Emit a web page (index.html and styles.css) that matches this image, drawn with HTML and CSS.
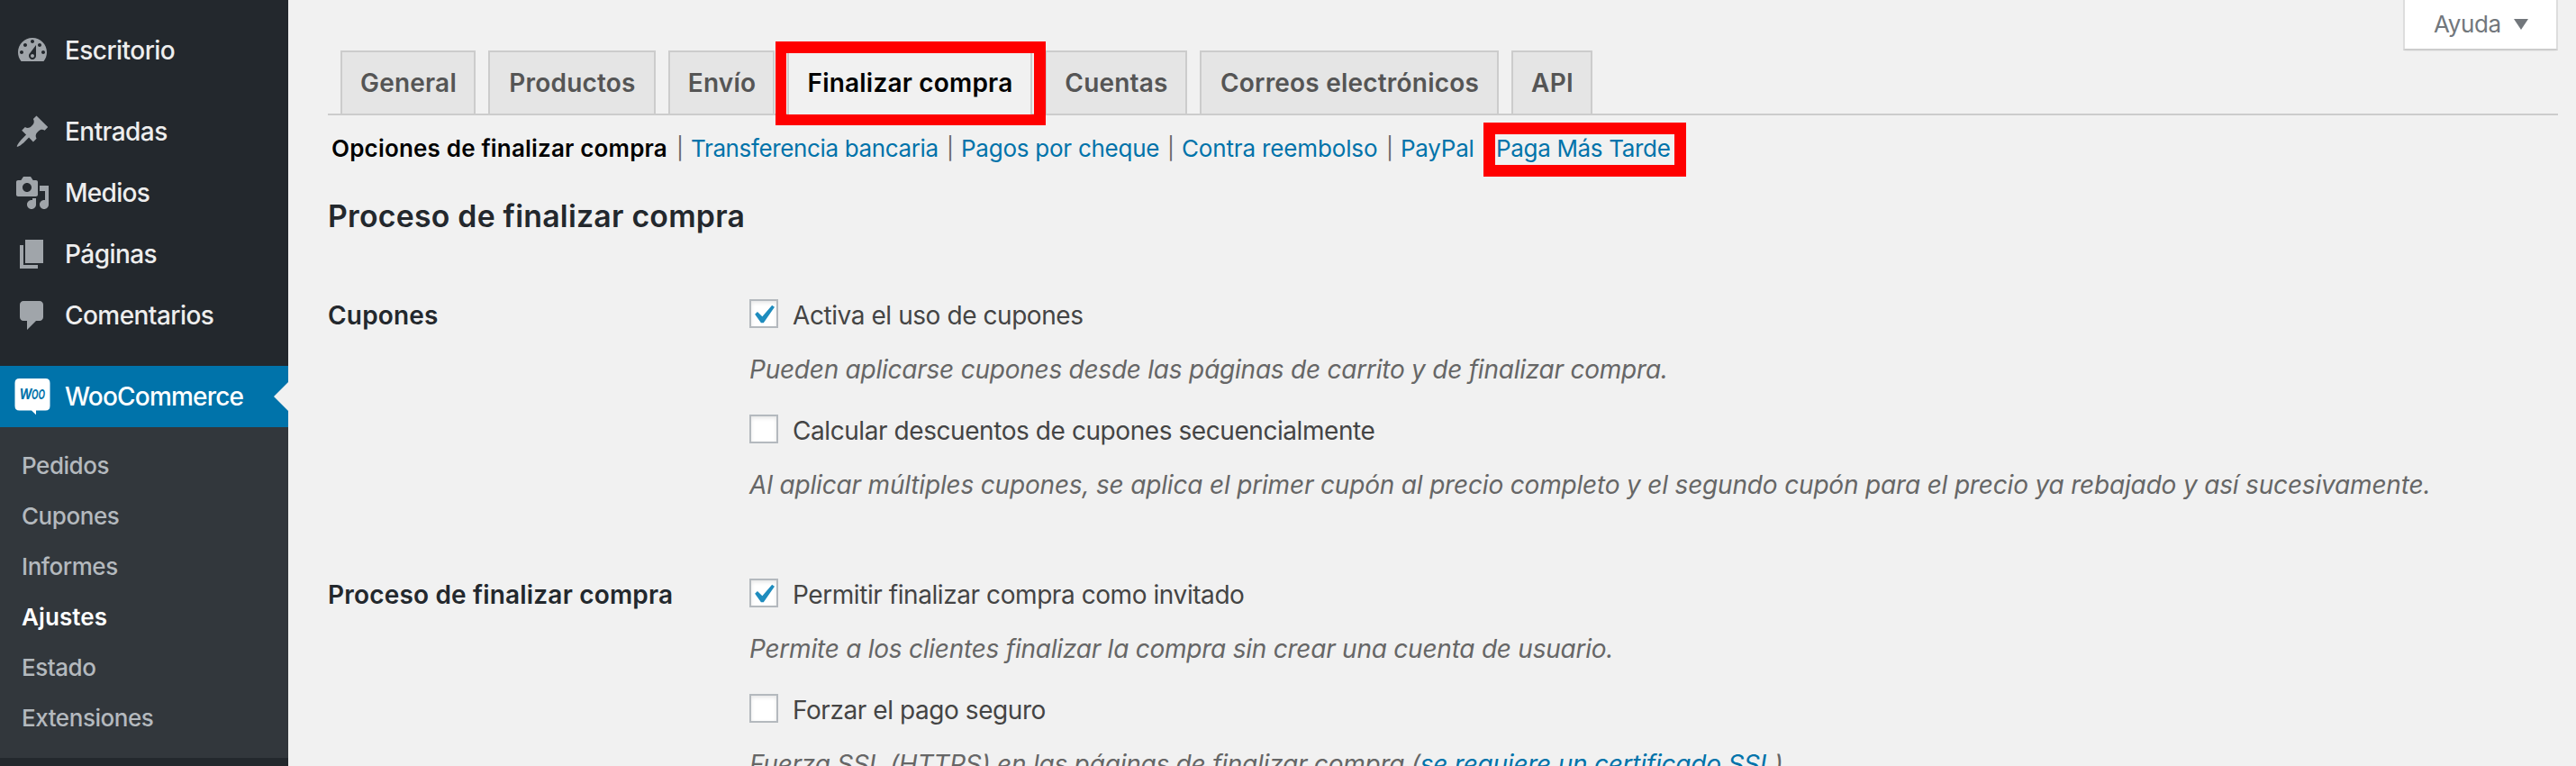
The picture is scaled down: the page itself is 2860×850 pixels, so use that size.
FILE: index.html
```html
<!DOCTYPE html>
<html lang="es">
<head>
<meta charset="utf-8">
<title>Ajustes de WooCommerce</title>
<link rel="stylesheet" href="styles.css">
</head>
<body>
<div class="admin">
  <nav class="sidebar">
    <ul class="menu">
      <li class="menu-item spaced"><svg class="icon" viewBox="0 0 20 20"><path d="M3.76 16h12.48c1.1-1.37 1.76-3.11 1.76-5 0-4.42-3.58-8-8-8s-8 3.58-8 8c0 1.89.66 3.63 1.76 5zM10 4c.55 0 1 .45 1 1s-.45 1-1 1-1-.45-1-1 .45-1 1-1zM6 6c.55 0 1 .45 1 1s-.45 1-1 1-1-.45-1-1 .45-1 1-1zm8 0c.55 0 1 .45 1 1s-.45 1-1 1-1-.45-1-1 .45-1 1-1zm-5.37 5.55L12 7v6c0 1.1-.9 2-2 2s-2-.9-2-2c0-.57.24-1.08.63-1.45zM4 10c.55 0 1 .45 1 1s-.45 1-1 1-1-.45-1-1 .45-1 1-1zm12 0c.55 0 1 .45 1 1s-.45 1-1 1-1-.45-1-1 .45-1 1-1zm-5 3c0-.55-.45-1-1-1s-1 .45-1 1 .45 1 1 1 1-.45 1-1z"/></svg><span>Escritorio</span></li>
      <li class="menu-item"><svg class="icon" viewBox="0 0 20 20"><path d="M10.44 3.02l1.82-1.82 6.36 6.35-1.83 1.82c-1.05-.68-2.48-.57-3.41.36l-.75.75c-.92.93-1.04 2.35-.35 3.41l-1.83 1.82-2.41-2.41-2.8 2.79c-.42.42-3.38 2.71-3.8 2.29s1.86-3.39 2.28-3.81l2.79-2.79L4.1 9.36l1.83-1.82c1.05.69 2.48.57 3.4-.36l.75-.75c.93-.92 1.05-2.35.36-3.41z"/></svg><span>Entradas</span></li>
      <li class="menu-item media"><svg class="icon" viewBox="0 0 20 20"><path d="M13 11V4c0-.55-.45-1-1-1h-1.67L9 1H5L3.67 3H2c-.55 0-1 .45-1 1v7c0 .55.45 1 1 1h10c.55 0 1-.45 1-1zM7 4.5c1.38 0 2.5 1.12 2.5 2.5S8.38 9.5 7 9.5 4.5 8.38 4.5 7 5.62 4.5 7 4.5zM14 6h5v10.5c0 1.38-1.12 2.5-2.5 2.5S14 17.88 14 16.5s1.12-2.5 2.5-2.5c.17 0 .34.02.5.05V9h-3V6zm-4 8.05V13h2v3.5c0 1.38-1.12 2.5-2.5 2.5S7 17.88 7 16.5 8.12 14 9.5 14c.17 0 .34.02.5.05z"/></svg><span>Medios</span></li>
      <li class="menu-item"><svg class="icon" viewBox="0 0 20 20"><path d="M6 15V2h10v13H6zm-1 1h8v2H3V5h2v11z"/></svg><span>Páginas</span></li>
      <li class="menu-item spaced"><svg class="icon" viewBox="0 0 20 20"><path d="M5 2h9c1.1 0 2 .9 2 2v7c0 1.1-.9 2-2 2h-2l-5 5v-5H5c-1.1 0-2-.9-2-2V4c0-1.1.9-2 2-2z"/></svg><span>Comentarios</span></li>
      <li class="menu-item current"><svg class="icon" viewBox="0 0 40 40"><path d="M5.500 0h29q5 0 5 5v25.500q0 5-5 5H24v4.700l-5-4.700H5.500q-5 0-5-5V5q0-5 5-5z"/><text class="woo" x="5.500" y="23.200" font-size="15.500" textLength="14" lengthAdjust="spacingAndGlyphs">W</text><text class="woo" x="19" y="22.600" font-size="14" textLength="15" lengthAdjust="spacingAndGlyphs">OO</text></svg><span>WooCommerce</span></li>
    </ul>
    <ul class="submenu">
      <li>Pedidos</li>
      <li>Cupones</li>
      <li>Informes</li>
      <li class="active">Ajustes</li>
      <li>Estado</li>
      <li>Extensiones</li>
    </ul>
  </nav>

  <main class="content">
    <button class="help">Ayuda<svg class="caret" viewBox="0 0 16 12"><path d="M0 0h16L8 12z"/></svg></button>

    <div class="tabs">
      <a class="tab general">General</a>
      <a class="tab products">Productos</a>
      <a class="tab shipping">Envío</a>
      <a class="tab checkout selected">Finalizar compra<span class="mark mark-tab"></span></a>
      <a class="tab accounts">Cuentas</a>
      <a class="tab emails">Correos electrónicos</a>
      <a class="tab api">API</a>
    </div>

    <ul class="sections">
      <li class="options"><b>Opciones de finalizar compra</b><i>|</i></li>
      <li class="transfer"><a>Transferencia bancaria</a><i>|</i></li>
      <li class="cheque"><a>Pagos por cheque</a><i>|</i></li>
      <li class="cod"><a>Contra reembolso</a><i>|</i></li>
      <li class="paypal"><a>PayPal</a></li>
      <li class="later"><a>Paga Más Tarde</a><span class="mark mark-link"></span></li>
    </ul>

    <h2 class="title">Proceso de finalizar compra</h2>

    <section class="row">
      <h3 class="row-name">Cupones</h3>
      <div class="fields">
        <label class="field"><span class="box"><svg viewBox="3.81 2.650 13.330 13.330"><path d="M14.830 4.890l1.340.940-5.810 8.380H9.020L5.780 9.670l1.340-1.250 2.570 2.400z"/></svg></span><span>Activa el uso de cupones</span></label>
        <p class="hint">Pueden aplicarse cupones desde las páginas de carrito y de finalizar compra.</p>
        <label class="field"><span class="box"></span><span>Calcular descuentos de cupones secuencialmente</span></label>
        <p class="hint long">Al aplicar múltiples cupones, se aplica el primer cupón al precio completo y el segundo cupón para el precio ya rebajado y así sucesivamente.</p>
      </div>
    </section>

    <section class="row">
      <h3 class="row-name">Proceso de finalizar compra</h3>
      <div class="fields">
        <label class="field"><span class="box"><svg viewBox="3.81 2.650 13.330 13.330"><path d="M14.830 4.890l1.340.940-5.810 8.380H9.020L5.780 9.670l1.340-1.250 2.570 2.400z"/></svg></span><span>Permitir finalizar compra como invitado</span></label>
        <p class="hint">Permite a los clientes finalizar la compra sin crear una cuenta de usuario.</p>
        <label class="field"><span class="box"></span><span>Forzar el pago seguro</span></label>
        <p class="hint">Fuerza SSL (HTTPS) en las páginas de finalizar compra (<a>se requiere un certificado SSL</a>).</p>
      </div>
    </section>
  </main>
</div>
</body>
</html>
```
FILE: styles.css
```css
* { box-sizing: border-box; }
body {
  margin: 0;
  background: #f1f1f1;
  color: #444;
  font: 28px/40px Inter, "Liberation Sans", sans-serif;
}
ul, p, h2, h3 { margin: 0; padding: 0; list-style: none; }
a { color: #0073aa; }

.admin { display: flex; height: 850px; overflow: hidden; }

/* Sidebar */
.sidebar { width: 320px; flex: none; background: #23282d; padding-top: 22px; font-weight: 500; }
.menu-item {
  display: flex;
  align-items: center;
  height: 68px;
  padding-left: 16px;
  gap: 16px;
  color: #eee;
  letter-spacing: -0.55px;
}
.menu-item.spaced { margin-bottom: 22px; }
.menu-item.media { letter-spacing: -0.7px; }
.icon { width: 40px; height: 40px; flex: none; fill: #a0a5aa; }
.menu-item.current {
  position: relative;
  background: #0073aa;
  color: #fff;
  letter-spacing: -0.8px;
}
.current .icon { fill: #fff; overflow: visible; }
.current .woo { fill: #0073aa; font-weight: 700; font-style: italic; letter-spacing: 0; }
.current::after {
  content: "";
  position: absolute;
  right: 0;
  top: 18px;
  border: 16px solid transparent;
  border-left: 0;
  border-right-color: #f1f1f1;
}
.submenu { background: #32373c; padding: 15px 0; }
.submenu li {
  height: 56px;
  padding-left: 24px;
  font-size: 26px;
  line-height: 56px;
  color: #b4b9be;
  letter-spacing: -0.45px;
}
.submenu li:last-child { height: 57px; }
.submenu .active { color: #fff; font-weight: 600; letter-spacing: 0.1px; }

/* Content */
.content {
  flex: 1;
  display: flex;
  flex-direction: column;
  padding: 0 20px 0 44px;
}
.help {
  display: flex;
  align-items: center;
  align-self: flex-end;
  gap: 14px;
  width: 172px;
  height: 56px;
  flex: none;
  padding: 0 0 1px 32px;
  border: 2px solid #ddd;
  border-top: 0;
  border-bottom-color: #ccc;
  background: #fff;
  box-shadow: 0 2px 2px -2px rgba(0, 0, 0, .1);
  color: #72777c;
  font: 26px/32px Inter, sans-serif;
  letter-spacing: -0.4px;
}
.caret { width: 16px; height: 12px; fill: #72777c; }

.tabs {
  display: flex;
  flex: none;
  height: 72px;
  gap: 14px;
  padding-left: 14px;
  border-bottom: 2px solid #ccc;
}
.tab {
  height: 70px;
  padding: 10px 0 10px 1px;
  border: 2px solid #ccc;
  border-bottom: 0;
  background: #e5e5e5;
  color: #555;
  font-weight: 600;
  line-height: 48px;
  text-align: center;
  letter-spacing: 0.2px;
  white-space: nowrap;
}
.general { width: 150px; }
.products { width: 186px; }
.shipping { width: 118px; }
.checkout { width: 272px; }
.accounts { width: 158px; }
.emails { width: 332px; }
.api { width: 90px; }
.tab.selected {
  position: relative;
  height: 72px;
  background: #f1f1f1;
  color: #000;
}

/* Highlight frames over the tab and the link */
.mark { position: absolute; border: 12px solid #f00; }
.mark-tab { left: -15px; top: -12px; width: 300px; height: 93px; border-width: 13px 13px 12px 12px; }
.mark-link { left: -14px; top: -12px; width: 225px; height: 60px; border-width: 13px; }

.sections { display: flex; padding: 20px 0 0 4px; font-size: 26px; line-height: 34px; }
.sections li { display: flex; justify-content: space-between; padding-right: 9px; white-space: nowrap; letter-spacing: -0.25px; }
.sections b { color: #000; font-weight: 600; letter-spacing: 0.18px; }
.sections i { color: #666; font-style: normal; font-size: 24px; width: 7px; }
.options { width: 399px; }
.sections .transfer { width: 300px; letter-spacing: -0.36px; }
.cheque { width: 245px; }
.sections .cod { width: 243px; letter-spacing: -0.15px; }
.paypal { width: 106px; }
.sections .later { position: relative; letter-spacing: -0.33px; }

.title { margin-top: 38px; color: #23282d; font-size: 33.8px; font-weight: 600; line-height: 40px; letter-spacing: 0.24px; }

.row { display: grid; grid-template-columns: 468px 1fr; margin-top: 82px; }
.title + .row { margin-top: 70px; }
.row-name { color: #23282d; font-size: 28px; font-weight: 600; letter-spacing: 0.18px; }
.field { display: flex; align-items: center; gap: 16px; height: 40px; letter-spacing: -0.43px; }
.box {
  width: 32px;
  height: 32px;
  flex: none;
  margin-bottom: 4px;
  border: 2px solid #b4b9be;
  background: #fff;
  box-shadow: inset 0 2px 4px rgba(0, 0, 0, .1);
}
.box svg { display: block; width: 28px; height: 28px; fill: #1e8cbe; }
.hint { margin-top: 20px; color: #666; font-style: italic; letter-spacing: -0.24px; white-space: nowrap; }
.hint.long { letter-spacing: -0.18px; }
.hint + .field { margin-top: 28px; }
.hint a { text-decoration: none; }
```
